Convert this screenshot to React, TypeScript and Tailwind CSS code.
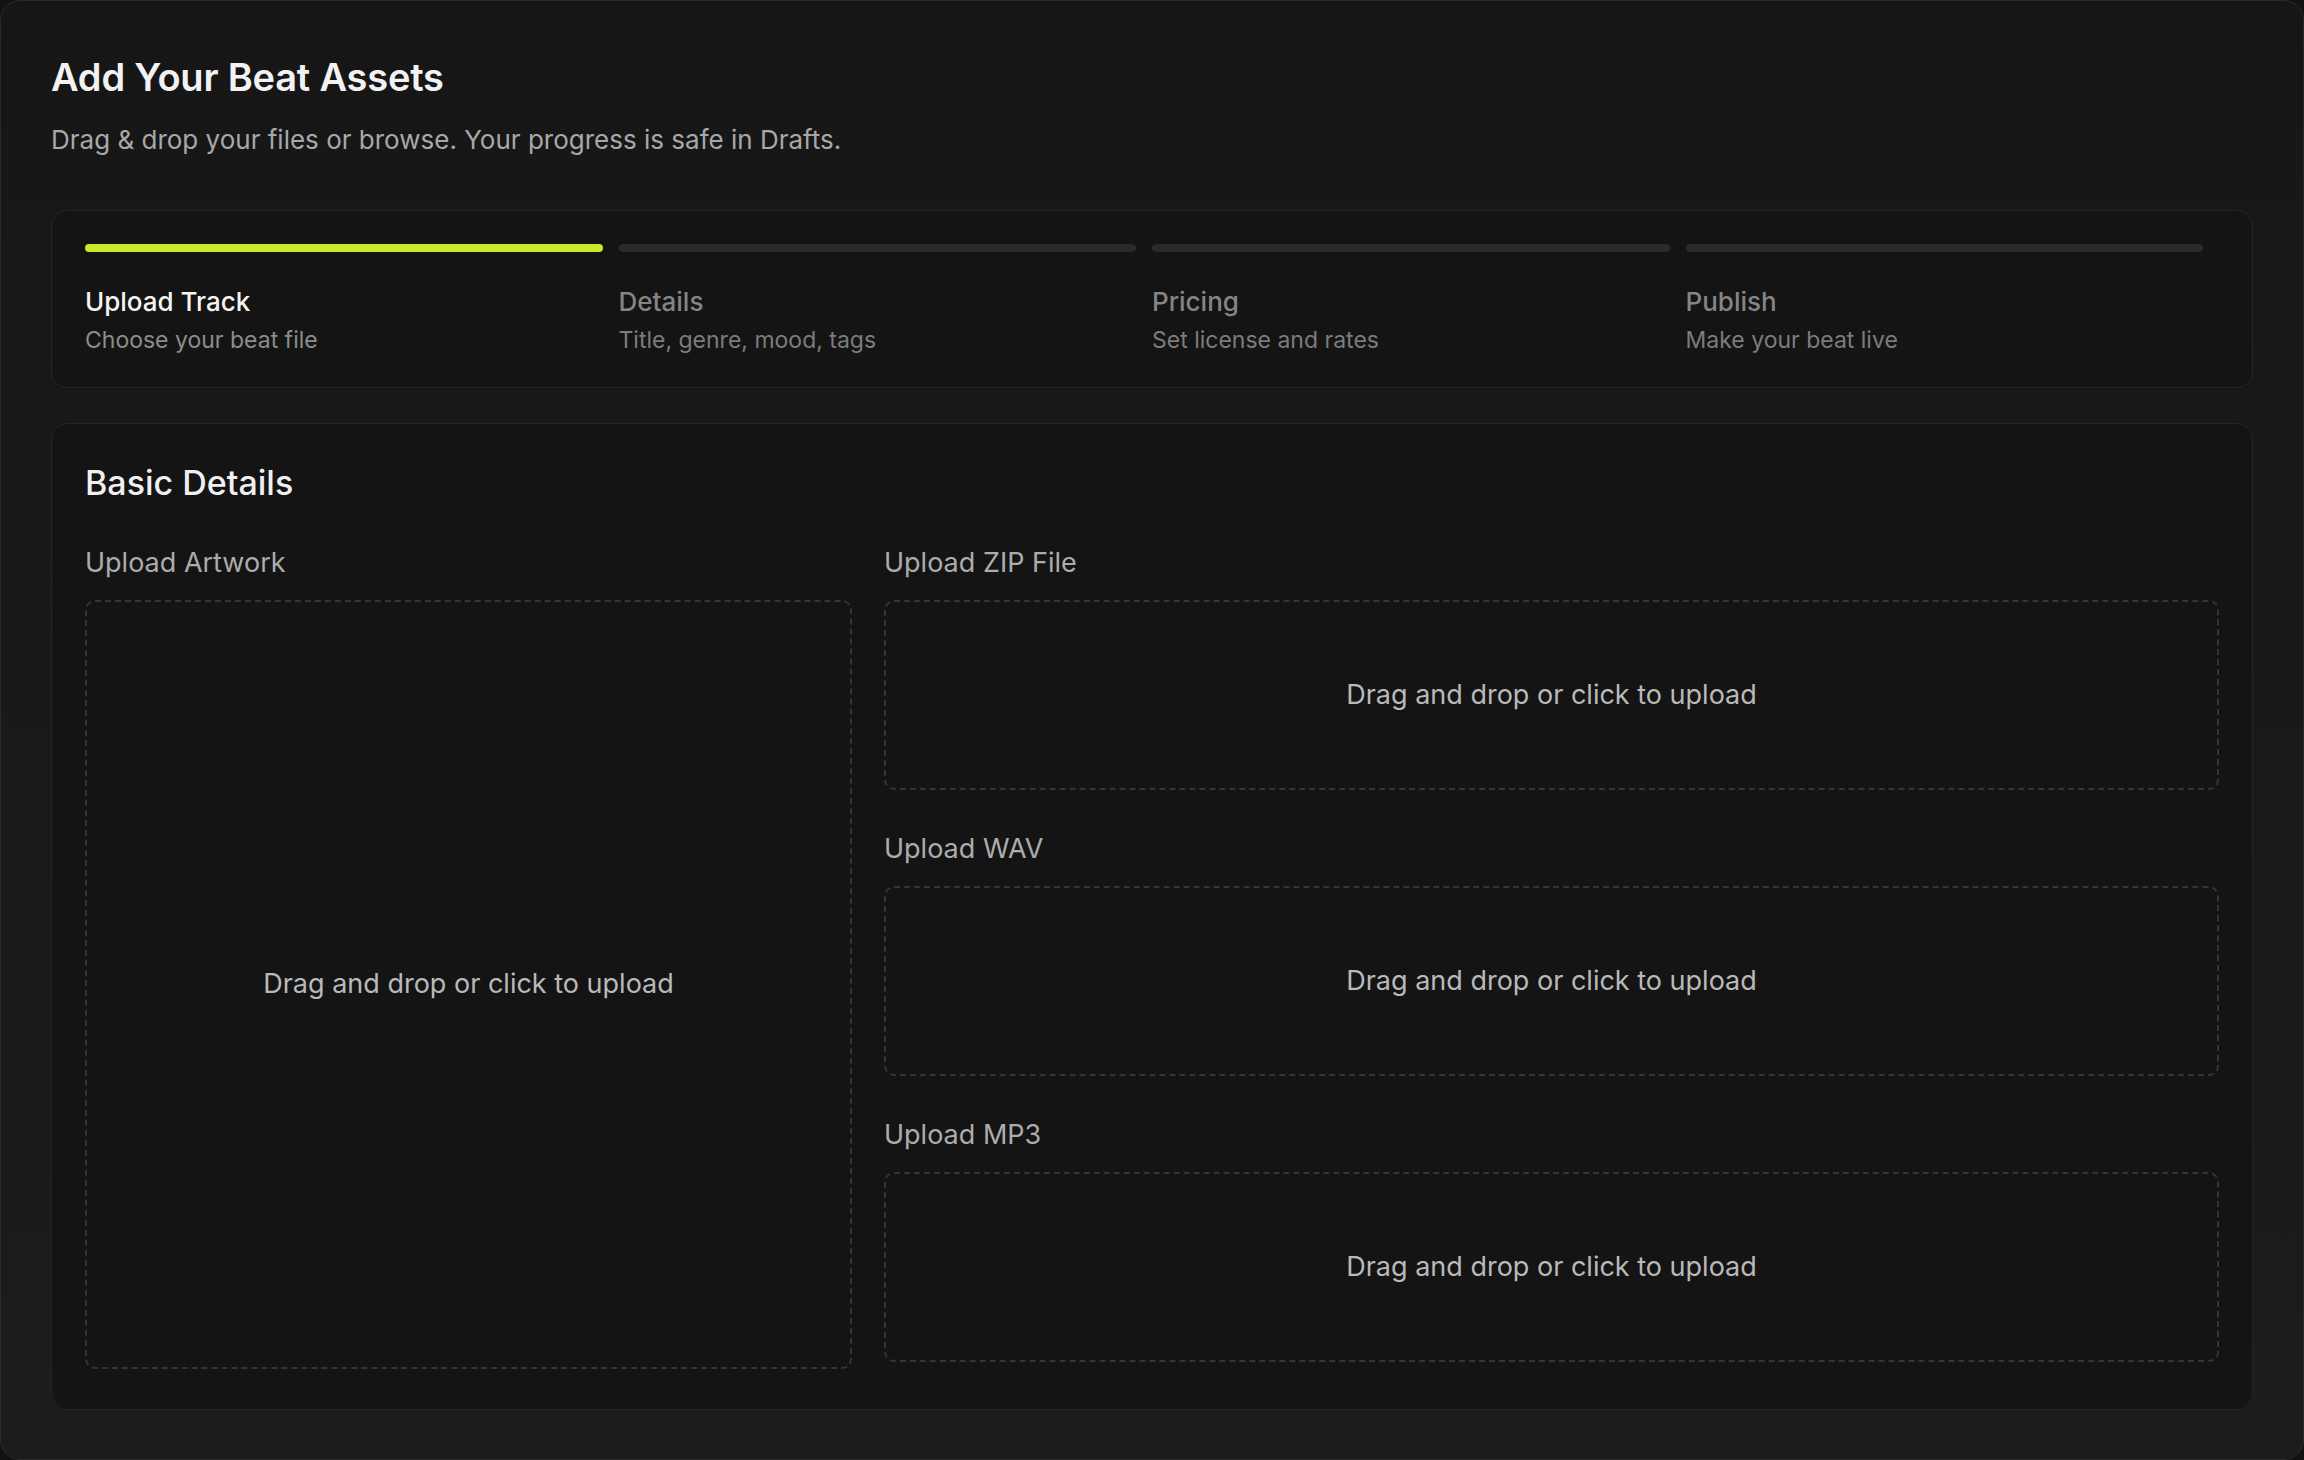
const steps = [
  { title: 'Upload Track', desc: 'Choose your beat file', active: true },
  { title: 'Details', desc: 'Title, genre, mood, tags', active: false },
  { title: 'Pricing', desc: 'Set license and rates', active: false },
  { title: 'Publish', desc: 'Make your beat live', active: false },
];

function DropZone({ className }: { className: string }) {
  return (
    <div
      className={`flex items-center justify-center rounded-[10px] border-2 border-dashed border-[#353535] text-[27px] text-[#b9b9b9] ${className}`}
    >
      Drag and drop or click to upload
    </div>
  );
}

function Field({ label }: { label: string }) {
  return (
    <div className="flex flex-col">
      <div className="text-[27px] leading-[32px] text-[#acacac]">{label}</div>
      <DropZone className="mt-[21px] h-[190px]" />
    </div>
  );
}

export default function App() {
  return (
    <div className="min-h-screen bg-[#121212] font-['Inter',sans-serif]">
      <div className="h-[1460px] rounded-[20px] border border-[#2a2a2a] bg-gradient-to-b from-[#161616] to-[#1c1c1c] px-[50px] pt-[52px]">
        <h1 className="text-[38px] font-semibold leading-[48px] tracking-[-0.2px] text-[#f2f2f2]">Add Your Beat Assets</h1>
        <p className="mt-[21px] text-[26px] leading-[36px] text-[#a8a8a8]">
          Drag &amp; drop your files or browse. Your progress is safe in Drafts.
        </p>

        <div className="mt-[52px] rounded-[16px] border border-[#252525] bg-[#141414] pb-[32px] pl-[33px] pr-[49px] pt-[33px]">
          <div className="grid grid-cols-4 gap-x-[16px]">
            {steps.map((s) => (
              <div key={s.title} className="flex flex-col">
                <div className={`h-[8px] rounded-full ${s.active ? 'bg-[#c6ea2b]' : 'bg-[#2a2a2a]'}`} />
                <div
                  className={`mt-[34px] text-[26px] font-medium leading-[32px] ${s.active ? 'text-[#f4f4f4]' : 'text-[#858585]'}`}
                >
                  {s.title}
                </div>
                <div className={`mt-[7px] text-[23px] leading-[30px] ${s.active ? 'text-[#8c8c8c]' : 'text-[#7c7c7c]'}`}>
                  {s.desc}
                </div>
              </div>
            ))}
          </div>
        </div>

        <div className="mt-[35px] rounded-[16px] border border-[#252525] bg-[#141414] px-[33px] pb-[40px] pt-[39px]">
          <h2 className="text-[34px] font-medium leading-[40px] text-[#f0f0f0]">Basic Details</h2>
          <div className="mt-[44px] grid grid-cols-[767px_1fr] gap-x-[32px]">
            <div className="flex flex-col">
              <div className="text-[27px] leading-[32px] text-[#acacac]">Upload Artwork</div>
              <DropZone className="mt-[21px] h-[769px]" />
            </div>
            <div className="flex flex-col gap-[43px]">
              <Field label="Upload ZIP File" />
              <Field label="Upload WAV" />
              <Field label="Upload MP3" />
            </div>
          </div>
        </div>
      </div>
    </div>
  );
}
